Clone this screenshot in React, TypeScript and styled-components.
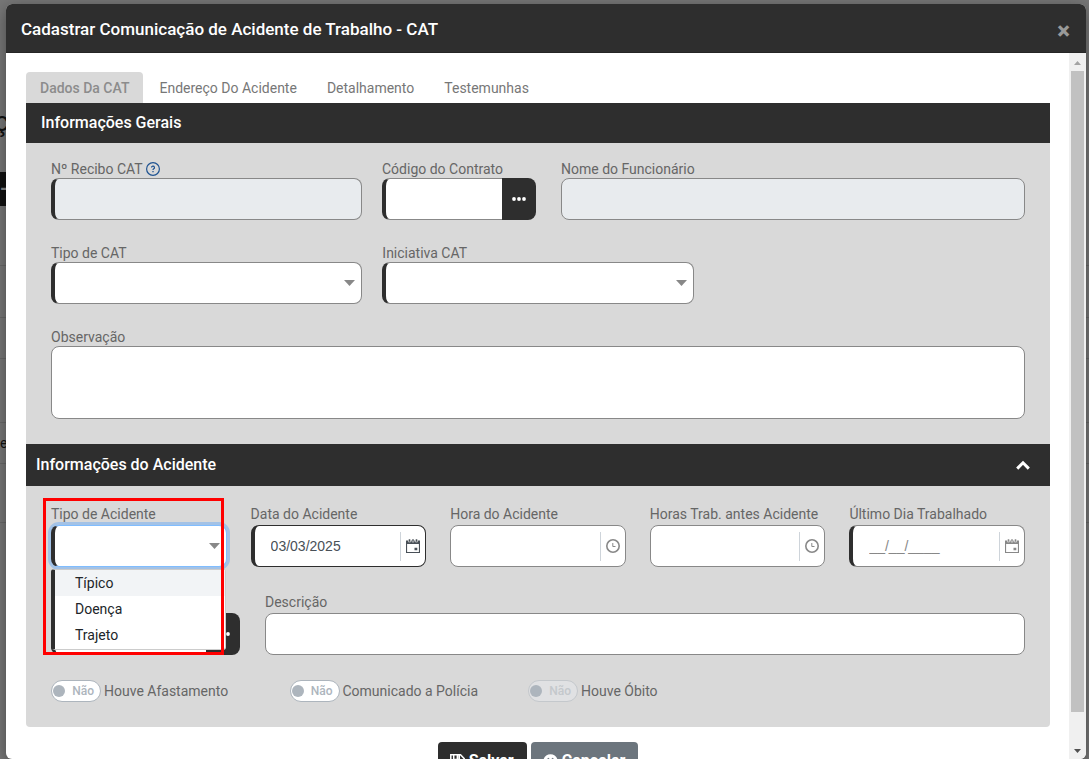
import React from "react";
import styled, { createGlobalStyle, css } from "styled-components";
import { FaTimesCircle } from "react-icons/fa";

const dark = "#2e2e2e";

const GlobalStyle = createGlobalStyle`
  * { box-sizing: border-box; }
  body {
    margin: 0;
    overflow: hidden;
    background: #777;
    color: #666;
    font: 14px/22px Roboto, sans-serif;
  }
  button, input, select, textarea { font: inherit; margin: 0; }
`;

const Backdrop = styled.div`
  height: 100vh;
  padding: 4px 3px 0 6px;
  position: relative;
`;

const PageBehind = styled.div`
  position: absolute;
  inset: 0;
  overflow: hidden;
  color: #111;
  display: flex;
  flex-direction: column;
`;

const BehindTitle = styled.div`
  width: 9px;
  height: 172px;
  padding-top: 106px;
  font-size: 28px;
  line-height: 32px;
  direction: rtl;
`;

const BehindBar = styled.div`
  width: 50%;
  height: 34px;
  background: #111;
  color: #888;
  font: 700 20px/32px Roboto, sans-serif;
`;

const BehindRow = styled.div<{ $h: number }>`
  height: ${(p) => p.$h}px;
  flex: none;
  border-bottom: 1px solid #686868;
  line-height: 40px;
`;

const Modal = styled.section`
  position: relative;
  height: 100%;
  display: flex;
  flex-direction: column;
  background: #fff;
  border-radius: 6px;
  overflow: hidden;
  box-shadow: 0 4px 16px rgba(0, 0, 0, 0.4);
`;

const ModalHeader = styled.header`
  flex: none;
  height: 49px;
  padding: 2px 16px 0 15px;
  display: flex;
  align-items: center;
  justify-content: space-between;
  background: ${dark};
  border-bottom: 1px solid #262626;
`;

const ModalTitle = styled.h1`
  margin: 0;
  color: #fff;
  font-size: 17px;
  font-weight: 500;
`;

const CloseButton = styled.button`
  border: 0;
  padding: 4px 0 0;
  background: none;
  color: #999;
  font-size: 24px;
  font-weight: 900;
  line-height: 22px;
`;

const ModalBody = styled.div`
  flex: 1;
  min-height: 0;
  display: flex;
`;

const Content = styled.form`
  flex: 1;
  min-width: 0;
  overflow: hidden;
  padding: 19px 19px 0 20px;
`;

const ScrollTrack = styled.div`
  width: 17px;
  flex: none;
  display: flex;
  flex-direction: column;
  align-items: center;
  padding-top: 1px;
  background: #f0f0f0;
`;

const ScrollArrow = styled.svg`
  width: 17px;
  height: 17px;
  flex: none;
`;

const ScrollThumb = styled.div`
  width: 13px;
  flex: 1;
  margin-bottom: 30px;
  background: #c1c1c1;
`;

const Tabs = styled.nav`
  display: flex;
  height: 31px;
  gap: 2px;
`;

const Tab = styled.button<{ $active?: boolean }>`
  border: 0;
  border-radius: 4px 4px 0 0;
  padding: 0 14px;
  background: ${(p) => (p.$active ? "#d9d9d9" : "transparent")};
  color: ${(p) => (p.$active ? "#8c8c8c" : "#777")};
  font-weight: ${(p) => (p.$active ? 500 : 400)};
`;

const PanelHeader = styled.header<{ $compact?: boolean }>`
  display: flex;
  align-items: center;
  justify-content: space-between;
  height: ${(p) => (p.$compact ? 42 : 40)}px;
  padding: ${(p) => (p.$compact ? "0 20px 0 10px" : "0 15px")};
  background: ${dark};
  color: #fff;
`;

const PanelTitle = styled.h2`
  margin: 0;
  font-size: 16px;
  font-weight: 500;
`;

const PanelBody = styled.div<{ $last?: boolean }>`
  display: flex;
  flex-direction: column;
  gap: 24px;
  padding: 17px 25px 25px;
  background: #d9d9d9;
  border-radius: ${(p) => (p.$last ? "0 0 4px 4px" : "0")};
`;

const Row = styled.div<{ $cols: string; $gap: number }>`
  display: grid;
  grid-template-columns: ${(p) => p.$cols};
  column-gap: ${(p) => p.$gap}px;
  align-items: end;
`;

const Field = styled.div<{ $tight?: boolean }>`
  position: relative;
  min-width: 0;
  display: flex;
  flex-direction: column;
  label {
    display: flex;
    align-items: center;
    gap: 3px;
    white-space: nowrap;
    line-height: ${(p) => (p.$tight ? 18 : 22)}px;
  }
`;

const NameField = styled(Field)`
  padding-left: 5px;
`;

const controlBox = css<{ $required?: boolean; $focused?: boolean; $strong?: boolean }>`
  width: 100%;
  height: 42px;
  border: 1px solid ${(p) => (p.$focused ? "#80bdff" : p.$strong ? dark : "#888")};
  border-radius: 8px;
  background: #fff;
  color: #495057;
  outline: 0;
  ${(p) => p.$required && `border-left: 4px solid ${dark};`}
  ${(p) => p.$focused && "box-shadow: 0 0 0 3px #a3c2e6;"}
`;

const TextInput = styled.input`
  ${controlBox}
  padding: 0 12px;
  &:read-only { background: #e8ebee; }
`;

const TextArea = styled.textarea`
  ${controlBox}
  display: block;
  height: 73px;
  resize: none;
`;

const SelectWrap = styled.div`
  display: grid;
  align-items: center;
  > * { grid-area: 1 / 1; }
  svg { justify-self: end; margin-right: 7px; pointer-events: none; }
`;

const Select = styled.select`
  ${controlBox}
  appearance: none;
  padding: 0 24px 0 12px;
`;

const Group = styled.div`
  ${controlBox}
  display: flex;
  align-items: center;
  overflow: hidden;
`;

const LookupGroup = styled.div`
  display: flex;
  ${TextInput} { flex: 1; min-width: 0; border-radius: 8px 0 0 8px; border-right: 0; }
`;

const LookupButton = styled.button`
  width: 34px;
  height: 42px;
  flex: none;
  display: flex;
  align-items: center;
  justify-content: center;
  border: 0;
  padding: 0;
  border-radius: 0 8px 8px 0;
  background: ${dark};
`;

const GroupInput = styled.input`
  flex: 1;
  min-width: 0;
  border: 0;
  padding: 0 0 0 16px;
  background: none;
  outline: 0;
  color: #495057;
  font-family: "Liberation Sans", sans-serif;
  &::placeholder { color: #888; opacity: 1; }
`;

const PickerButton = styled.button<{ $strong?: boolean }>`
  width: 25px;
  height: 29px;
  flex: none;
  display: flex;
  align-items: center;
  justify-content: center;
  border: 0;
  border-left: 1px solid #ced4da;
  padding: 0;
  background: none;
  color: ${(p) => (p.$strong ? "#495057" : "#888")};
`;

const Options = styled.ul`
  position: absolute;
  z-index: 2;
  top: 66px;
  left: 0;
  right: 1px;
  margin: 0;
  padding: 0 0 1px;
  list-style: none;
  background: #fff;
  color: #212529;
  border: 1px solid #ccc;
  border-left: 4px solid ${dark};
  border-radius: 3px;
`;

const Option = styled.li<{ $active?: boolean }>`
  padding-left: 20px;
  line-height: 26px;
  background: ${(p) => (p.$active ? "#f2f4f6" : "transparent")};
`;

const Highlight = styled.div`
  position: absolute;
  z-index: 3;
  top: -5px;
  left: -8px;
  right: 3px;
  height: 157px;
  border: 3px solid #f00;
  pointer-events: none;
`;

const Switches = styled.div`
  display: grid;
  grid-template-columns: repeat(4, 1fr);
  padding: 1px 20px 0 0;
`;

const SwitchLabel = styled.label`
  display: flex;
  align-items: center;
  gap: 3px;
  white-space: nowrap;
`;

const SwitchTrack = styled.span<{ $disabled?: boolean }>`
  width: 50px;
  height: 22px;
  display: flex;
  align-items: center;
  justify-content: space-between;
  padding: 0 6px 0 1px;
  border: 1px solid ${(p) => (p.$disabled ? "#c4c8cc" : "#adb5bd")};
  border-radius: 11px;
  background: ${(p) => (p.$disabled ? "#e0e1e3" : "#fff")};
  color: ${(p) => (p.$disabled ? "#c4c8cc" : "#adb5bd")};
  font-size: 12px;
  font-weight: 500;
  line-height: 20px;
`;

const Knob = styled.input`
  appearance: none;
  width: 12px;
  height: 12px;
  border-radius: 50%;
  background: #adb5bd;
`;

const Actions = styled.footer`
  display: flex;
  justify-content: center;
  gap: 4px;
  padding-top: 15px;
`;

const ActionButton = styled.button<{ $tone: string }>`
  display: flex;
  align-items: center;
  gap: 4px;
  height: 38px;
  padding: 0 13px 0 12px;
  border: 0;
  border-radius: 4px;
  background: ${(p) => p.$tone};
  color: #fff;
  font-size: 16px;
  font-weight: 700;
`;

const Caret = () => (
  <svg width="11" height="6" viewBox="0 0 11 6" aria-hidden="true">
    <path d="M0 0h11L5.500 6z" fill="#888" />
  </svg>
);

const Dots = () => (
  <svg width="14" height="4" viewBox="0 0 14 4" fill="#fff" aria-hidden="true">
    <circle cx="2" cy="2" r="1.900" />
    <circle cx="7" cy="2" r="1.900" />
    <circle cx="12" cy="2" r="1.900" />
  </svg>
);

const ChevronUp = () => (
  <svg width="14" height="10" viewBox="0 0 14 10" fill="none" stroke="currentColor" strokeWidth="3" aria-hidden="true">
    <path d="M1.200 8.600L7 2.800l5.800 5.800" />
  </svg>
);

const HelpIcon = () => (
  <svg width="14" height="14" viewBox="0 0 14 14" fill="none" stroke="#1f5391" aria-hidden="true">
    <circle cx="7" cy="7" r="6.400" strokeWidth="1.200" />
    <path d="M5.500 5.600a1.500 1.400 0 1 1 2.200 1.200c-.5.300-.7.500-.7 1.100" strokeWidth="1.200" />
    <path d="M7 9v1.300" strokeWidth="1.300" />
  </svg>
);

const CalendarIcon = () => (
  <svg width="14" height="14" viewBox="0 0 14 14" fill="currentColor" aria-hidden="true">
    <path fillRule="evenodd" d="M0 1.500h14V14H0zM1.100 5v8h11.800V5z" />
    <path d="M2.500 0h2v3h-2zM6 0h2v3H6zM9.500 0h2v3h-2z" stroke="#fff" strokeWidth=".5" />
    <path d="M8.500 8.700h2.800v2.600H8.500z" />
  </svg>
);

const ClockIcon = () => (
  <svg width="14" height="14" viewBox="0 0 14 14" fill="none" stroke="currentColor" aria-hidden="true">
    <circle cx="7" cy="7" r="6.200" strokeWidth="1.600" />
    <path d="M6.800 4v3.500h2.700" strokeWidth="1" />
  </svg>
);

const SaveIcon = () => (
  <svg width="15" height="14" viewBox="0 0 15 14" fill="none" stroke="currentColor" aria-hidden="true">
    <path d="M.8.800h9.700l3.700 3.800v8.600H.8z" strokeWidth="1.500" />
    <path d="M3.700.800v4.700h5.600V.800" strokeWidth="1.500" />
    <path d="M7.600 1v4" strokeWidth="2" />
    <circle cx="7.500" cy="9.500" r="1.600" fill="currentColor" />
  </svg>
);

function SelectField({ id, label, tight, focused, children }: {
  id: string; label: string; tight?: boolean; focused?: boolean; children?: React.ReactNode;
}) {
  return (
    <Field $tight={tight}>
      <label htmlFor={id}>{label}</label>
      <SelectWrap>
        <Select id={id} $required $focused={focused} />
        <Caret />
      </SelectWrap>
      {children}
    </Field>
  );
}

function PickerField({ id, label, kind, required, value, placeholder }: {
  id: string; label: string; kind: "date" | "time"; required?: boolean; value?: string; placeholder?: string;
}) {
  return (
    <Field>
      <label htmlFor={id}>{label}</label>
      <Group $required={required} $strong={!!value}>
        <GroupInput id={id} defaultValue={value} placeholder={placeholder} />
        <PickerButton type="button" $strong={!!value} aria-label={`Selecionar ${label}`}>
          {kind === "date" ? <CalendarIcon /> : <ClockIcon />}
        </PickerButton>
      </Group>
    </Field>
  );
}

function Lookup({ id, name }: { id: string; name: string }) {
  return (
    <LookupGroup>
      <TextInput id={id} aria-label={name} $required />
      <LookupButton type="button" aria-label={`Pesquisar ${name}`}><Dots /></LookupButton>
    </LookupGroup>
  );
}

function Switch({ label, disabled }: { label: string; disabled?: boolean }) {
  return (
    <SwitchLabel>
      <SwitchTrack $disabled={disabled}>
        <Knob type="checkbox" disabled={disabled} />
        Não
      </SwitchTrack>
      {label}
    </SwitchLabel>
  );
}

export default function App() {
  return (
    <Backdrop>
      <GlobalStyle />
      <PageBehind aria-hidden="true">
        <BehindTitle>ç</BehindTitle>
        <BehindBar>-</BehindBar>
        <BehindRow $h={60} />
        <BehindRow $h={52} />
        <BehindRow $h={41} />
        <BehindRow $h={64} />
        <BehindRow $h={41}>e</BehindRow>
        <BehindRow $h={59} />
      </PageBehind>
      <Modal role="dialog" aria-labelledby="titulo">
        <ModalHeader>
          <ModalTitle id="titulo">Cadastrar Comunicação de Acidente de Trabalho - CAT</ModalTitle>
          <CloseButton type="button" aria-label="Fechar">×</CloseButton>
        </ModalHeader>
        <ModalBody>
          <Content>
            <Tabs>
              <Tab type="button" $active>Dados Da CAT</Tab>
              <Tab type="button">Endereço Do Acidente</Tab>
              <Tab type="button">Detalhamento</Tab>
              <Tab type="button">Testemunhas</Tab>
            </Tabs>
            <PanelHeader><PanelTitle>Informações Gerais</PanelTitle></PanelHeader>
            <PanelBody>
              <Row $cols="311fr 154fr 469fr" $gap={20}>
                <Field $tight>
                  <label htmlFor="recibo">Nº Recibo CAT <HelpIcon /></label>
                  <TextInput id="recibo" $required readOnly />
                </Field>
                <Field $tight>
                  <label htmlFor="contrato">Código do Contrato</label>
                  <Lookup id="contrato" name="Código do Contrato" />
                </Field>
                <NameField $tight>
                  <label htmlFor="nome">Nome do Funcionário</label>
                  <TextInput id="nome" readOnly />
                </NameField>
              </Row>
              <Row $cols="repeat(3, 1fr)" $gap={20}>
                <SelectField id="tipo-cat" label="Tipo de CAT" tight />
                <SelectField id="iniciativa" label="Iniciativa CAT" tight />
              </Row>
              <Field $tight>
                <label htmlFor="obs">Observação</label>
                <TextArea id="obs" />
              </Field>
            </PanelBody>
            <PanelHeader $compact>
              <PanelTitle>Informações do Acidente</PanelTitle>
              <ChevronUp />
            </PanelHeader>
            <PanelBody $last>
              <Row $cols="repeat(5, 1fr)" $gap={24}>
                <SelectField id="tipo-acidente" label="Tipo de Acidente" focused>
                  <Options>
                    <Option $active>Típico</Option>
                    <Option>Doença</Option>
                    <Option>Trajeto</Option>
                  </Options>
                  <Highlight />
                </SelectField>
                <PickerField id="data" label="Data do Acidente" kind="date" required value="03/03/2025" />
                <PickerField id="hora" label="Hora do Acidente" kind="time" />
                <PickerField id="horas-trab" label="Horas Trab. antes Acidente" kind="time" />
                <PickerField id="ultimo-dia" label="Último Dia Trabalhado" kind="date" required placeholder="__/__/____" />
              </Row>
              <Row $cols="189fr 760fr" $gap={25}>
                <Lookup id="codigo" name="Código" />
                <Field>
                  <label htmlFor="descricao">Descrição</label>
                  <TextInput id="descricao" />
                </Field>
              </Row>
              <Switches>
                <Switch label="Houve Afastamento" />
                <Switch label="Comunicado a Polícia" />
                <Switch label="Houve Óbito" disabled />
              </Switches>
            </PanelBody>
            <Actions>
              <ActionButton type="submit" $tone={dark}><SaveIcon />Salvar</ActionButton>
              <ActionButton type="button" $tone="#6c757d"><FaTimesCircle size={15} />Cancelar</ActionButton>
            </Actions>
          </Content>
          <ScrollTrack>
            <ScrollArrow viewBox="0 0 17 17"><path d="M5 11l3.500-4 3.500 4z" fill="#a3a3a3" /></ScrollArrow>
            <ScrollThumb />
            <ScrollArrow viewBox="0 0 17 17"><path d="M5 7l3.500 4L12 7z" fill="#505050" /></ScrollArrow>
          </ScrollTrack>
        </ModalBody>
      </Modal>
    </Backdrop>
  );
}
